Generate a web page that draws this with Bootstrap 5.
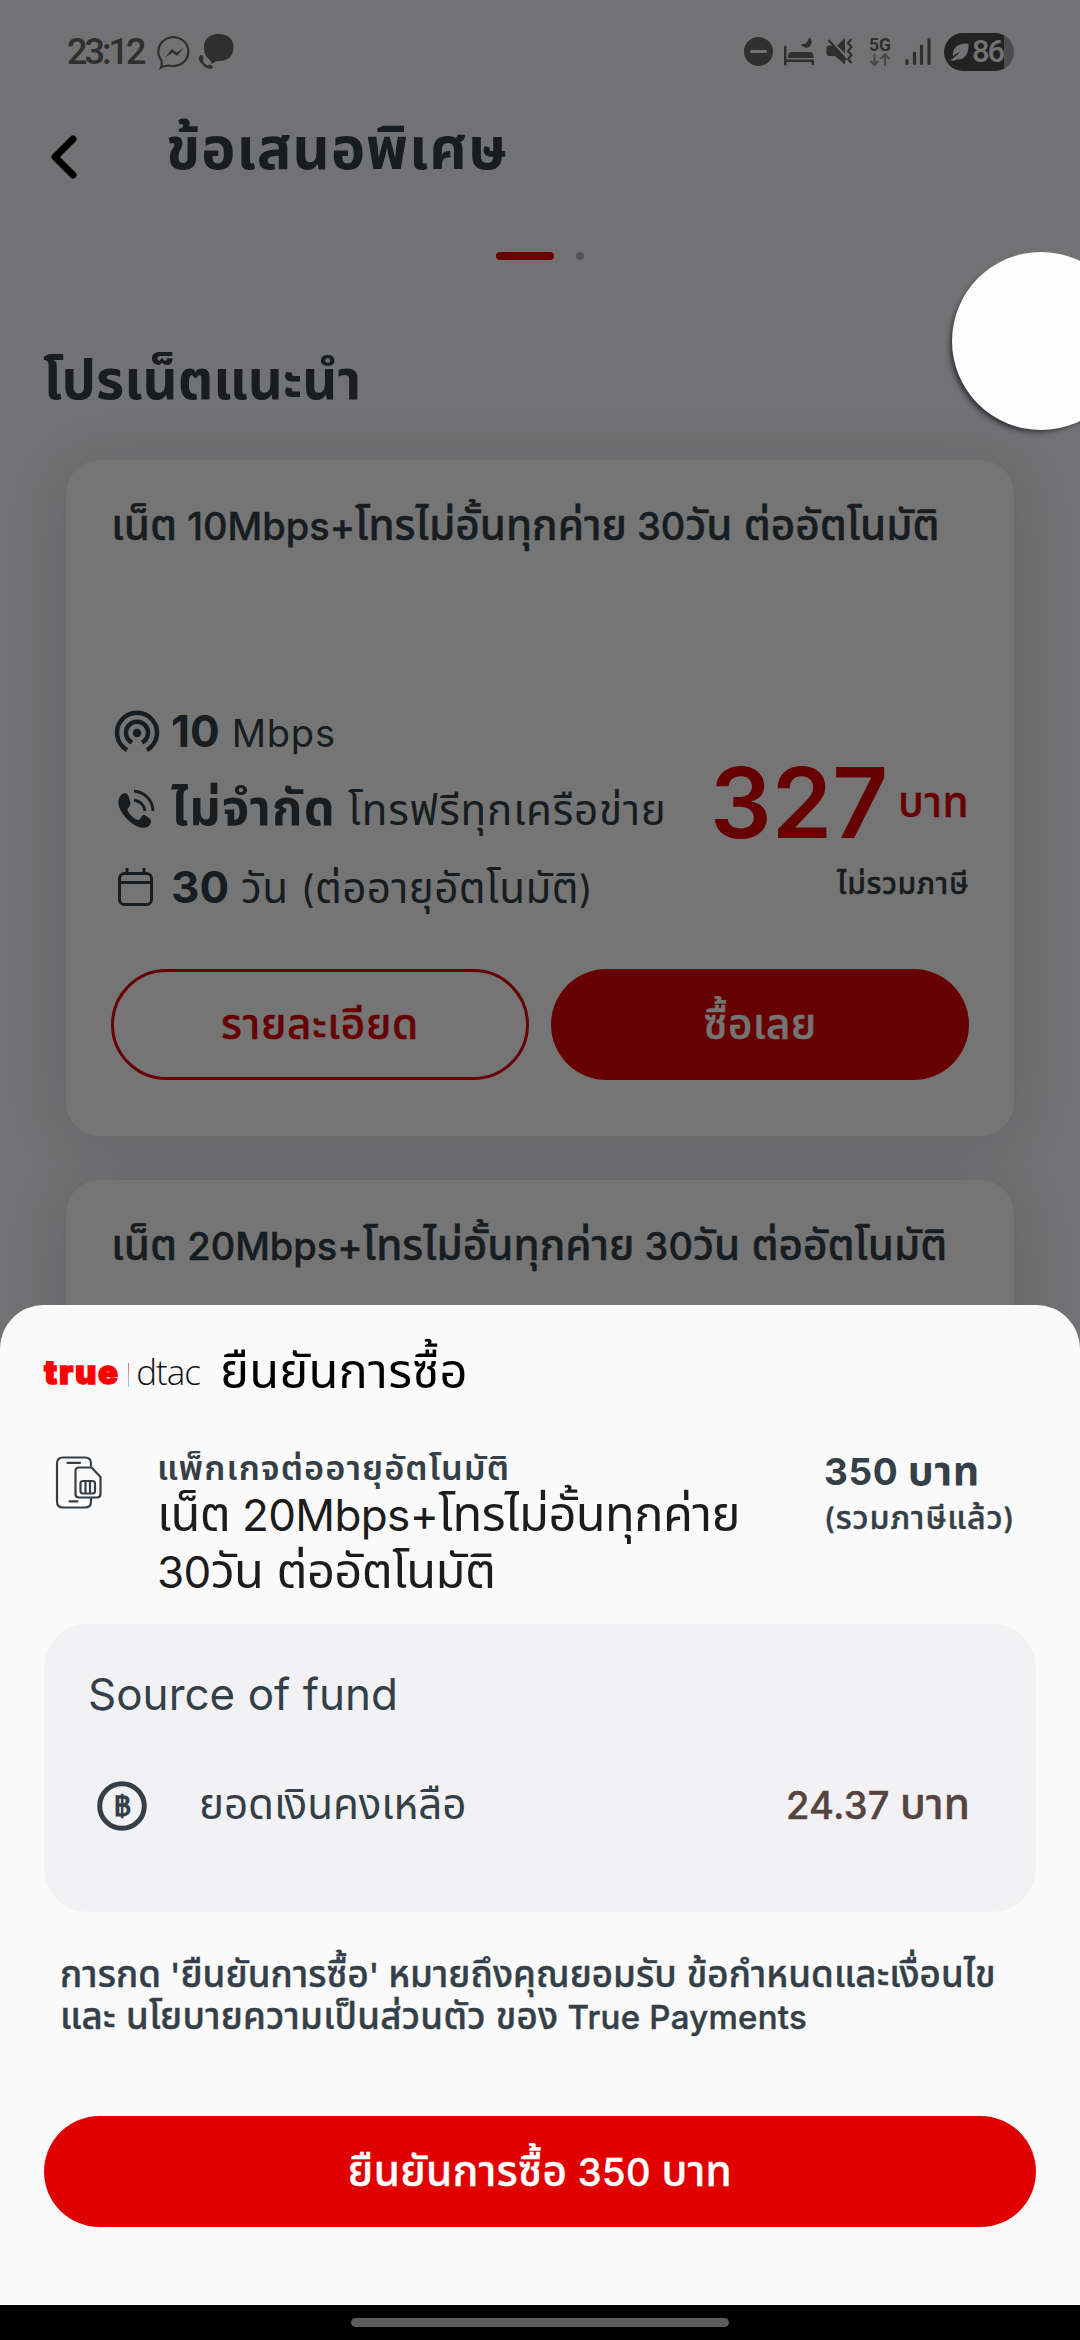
<!DOCTYPE html>
<html lang="th">
<head>
<meta charset="utf-8">
<meta name="viewport" content="width=device-width, initial-scale=1">
<title>ข้อเสนอพิเศษ</title>
<link href="https://cdn.jsdelivr.net/npm/bootstrap@5.3.0/dist/css/bootstrap.min.css" rel="stylesheet">
<style>
body{font-family:Inter,"Noto Sans Thai",sans-serif;color:#343f48;background:#000}
.screen{width:1080px;height:2340px;background:#f8f8fc}
/* Thai runs are set slightly larger than the Latin ones beside them */
.t{white-space:nowrap;display:inline-block}
.t>b{font-size:1.11em;line-height:0;font-weight:inherit}
.m{font-weight:500;-webkit-text-stroke:.45px currentColor}
.status{height:104px;padding:0 66px 0 67px}
.clock{font:500 36px/104px Roboto,sans-serif;color:#666;letter-spacing:-3px;width:76px}
.batt{width:70px;height:38px;margin-left:4px;border-radius:19px;background:linear-gradient(90deg,#4a4a4a 60px,#a6a6aa 60px);color:#f8f8fc;font:500 31px/38px Roboto,sans-serif;letter-spacing:-2.2px}
.topbar{height:94px;padding-left:51px}
.topbar svg{margin-top:11px}
.pagetitle{font-weight:700;font-size:52px;line-height:94px;margin-left:89px;letter-spacing:1px}
.dots{height:116px;gap:22px}
.dot-on{width:58px;height:8px;border-radius:4px;background:#e00000}
.dot-off{width:8px;height:8px;border-radius:4px;background:#b4b8c4}
.sect{height:146px;padding-left:43px;font-weight:700;font-size:49px;line-height:136px}
.offer{margin:0 66px 44px;border:0;border-radius:34px;background:#fff;padding:0 45px;box-shadow:0 6px 60px rgba(0,0,0,.13);height:676px}
.offer-title{font-size:38px;line-height:133px;height:232px}
.feat{height:78px}
.f-b{font-size:44px;font-weight:700;line-height:79px;margin-right:12px}
.f-u{letter-spacing:1.3px}
.f-t{font-size:38px;line-height:83px}
.g8{letter-spacing:.8px}
.g4{letter-spacing:.38px}
.price{padding-top:50px;color:#e00000}
.p-num{font-size:97px;font-weight:600;line-height:121px;margin-right:10px}
.p-unit{font-size:38px;line-height:122px;letter-spacing:.5px}
.p-note{font-size:27px;line-height:41px;color:#343f48;letter-spacing:.63px}
.acts{gap:22px;margin-top:43px}
.pill{height:111px;border-radius:56px;font-size:38px;padding:0;border:0;line-height:112px;letter-spacing:.4px}
.acts .pill{width:418px}
.pill-red,.pill-red:hover{background:#e00000;color:#fff}
.pill-line{border:3px solid #e00000;color:#e00000;line-height:106px;letter-spacing:.7px}
.scrim{background:rgba(0,0,0,.54)}
.bubble{width:178px;height:178px;border-radius:50%;background:#fdfdfd;left:952px;top:252px;box-shadow:-4px 4px 5px -2px rgba(20,25,30,.7)}
.bsheet{top:1305px;height:1000px;background:#fafafa;border-radius:44px 44px 0 0;padding:0 44px;border-top:1px solid #fff}
.head{height:131px}
.logo-true{font-weight:900;font-size:33px;color:#f00;line-height:132px;-webkit-text-stroke:1.4px #f00;letter-spacing:1.7px}
.logo-sep{width:1.5px;height:24px;margin:6px 7px 0 8px;background:linear-gradient(#f66,#caa 50%,#6df)}
.logo-dtac{font:300 35px/132px "Open Sans",sans-serif;color:#111;letter-spacing:-1px}
.h-title{font-size:44px;line-height:130px;color:#000;margin-left:20px;letter-spacing:.2px}
.item{height:187px}
.simcell{width:113px}
.desc{padding-top:14px}
.i-a{font-size:31px;font-weight:600;line-height:36px;letter-spacing:1.04px}
.i-b{font-size:44px;line-height:57px;color:#1c1c1c;letter-spacing:-.63px}
.cost{padding-top:11px;width:212px}
.p-a{font-size:37px;font-weight:700;line-height:47px;letter-spacing:.6px}
.p-b{font-size:29px;line-height:47px;letter-spacing:.93px}
.fund{height:288px;border-radius:44px;background:#f2f2f5;padding:0 66px 0 44px}
.s-a{font-size:44px;line-height:140px}
.s-b{font-size:38px;line-height:82px;letter-spacing:-.1px}
.s-c{font-size:38px;line-height:82px;color:#55433f;letter-spacing:.2px}
.coin{width:111px;height:84px}
.terms{margin:43px 0 78px 16px;font-size:33px;line-height:41.5px;letter-spacing:.1px}
.g3{letter-spacing:.28px}
.navb{height:35px;background:#000;top:2305px}
.handle{width:378px;height:9px;border-radius:5px;background:#5c5c5c}
</style>
</head>
<body>
<div class="screen position-relative overflow-hidden">
  <div class="status d-flex align-items-center justify-content-between">
    <div class="d-flex align-items-center">
      <span class="t clock">23:12</span>
      <svg width="92" height="104" viewBox="143 0 92 104"><path d="M161 67.500C162 65 162 62.500 161.500 60.500A15 14.500 0 1 1 169 65.500Q165 65.500 161 67.500Z" fill="none" stroke="#666" stroke-width="2.200"/><path d="M165 57.500 172 49 176.500 52.500 183.500 48 177 56 172.500 52.800Z" fill="#666"/><path d="M218 34C227 34 233.500 38 233.500 47S228 61 219 61Q215 61 212 64 211 61 209 59C206 57 204 53 204 47 204 39 210 34 218 34Z" fill="#666"/><path d="M200 55.500C198 57 198.500 60 201 63 204 67 208 69.500 212 68.500 214 67.500 212 65 210 64.500L207.500 65.500C205 64.500 203.500 62.500 203 60.500L203.500 58C203 55.500 201.500 54.500 200 55.500Z" fill="#666"/></svg>
    </div>
    <div class="d-flex align-items-center">
      <svg width="200" height="104" viewBox="740 0 200 104" fill="#666"><circle cx="758.500" cy="51.500" r="14.500"/><path d="M751.500 51.500h14" stroke="#f8f8fc" stroke-width="3" stroke-linecap="round"/>
      <path d="M784 47q0-1.500 1.200-1.500T786.500 47V59.500H813q1 0 1 1.200V65h-2.500v-3H786.500v3.500H784ZM788 58v-2q0-4 4-4h17q4.500 0 4.500 4v2Z"/><path d="M809 37.500a5.500 5.500 0 1 1-8 6.500q6 1.500 8-6.500Z"/>
      <path d="M845 38v15.500L837 45.500ZM829 45.500h4.500L845 57v7.500L835 56h-6q-2.500 0-2.500-2.500V48q0-2.500 2.500-2.500Z"/><path d="M828.500 40 846 60" stroke="#666" stroke-width="2.400"/><path d="M851.500 39l-3.500 4 3.500 4-3.500 4 3.500 4-3.500 4 3.500 4" fill="none" stroke="#666" stroke-width="2.200" stroke-linejoin="round"/>
      <text x="869" y="51" font-family="Roboto" font-weight="700" font-size="17.500" textLength="22">5G</text><path d="M874.500 54v11m-4-4 4 4 4-4M885 66V55m-4.500 4 4.500-4.500 4.500 4.500" fill="none" stroke="#999" stroke-width="2"/>
      <path d="M907 60.500v3M914.500 53v10.500M921.500 46v17.500M929 39.500v24" stroke="#666" stroke-width="3.200" stroke-linecap="round"/></svg>
      <div class="batt d-flex align-items-center"><svg width="28" height="38" viewBox="0 0 28 38" fill="#f8f8fc"><path d="M9 23.500C8 15 13 10.500 24.500 10.500 25 21 21 27 12.500 26.500 10 28 8 28 6 27 9 26 12 23 16.500 18.500 13 20 11 21.500 9 23.500Z"/></svg><span class="t">86</span></div>
    </div>
  </div>
  <div class="topbar d-flex align-items-center">
    <svg width="26" height="44" viewBox="0 0 26 44" fill="none" stroke="#000" stroke-width="7" stroke-linecap="round" stroke-linejoin="round"><path d="M22 4 4 22 22 40"/></svg>
    <span class="t pagetitle"><b>ข้อเสนอพิเศษ</b></span>
  </div>
  <div class="dots d-flex align-items-center justify-content-center"><i class="dot-on"></i><i class="dot-off"></i></div>
  <div class="sect"><span class="t"><b>โปรเน็ตแนะนำ</b></span></div>
  <div class="card offer">
    <div class="offer-title"><span class="t m"><b>เน็ต</b> 10Mbps+<b>โทรไม่อั้นทุกค่าย</b> 30<b>วัน ต่ออัตโนมัติ</b></span></div>
    <div class="d-flex justify-content-between">
      <div>
        <div class="feat d-flex"><svg width="60" height="78" viewBox="111 692 60 78" fill="none" stroke="#343f48" stroke-width="4.500"><path d="M127 750A20 20 0 1 1 147 750M132 742.500A11 11 0 1 1 142 742.500"/><circle cx="137" cy="733" r="4.300" fill="#343f48" stroke="none"/></svg><span class="t f-b">10</span><span class="t f-t g8">Mbps</span></div>
        <div class="feat d-flex"><svg width="60" height="78" viewBox="111 770 60 78"><path d="M121 795C124 792 127.500 793 128.500 796L130.500 803C131 806 127 808 127.500 810 129 814.500 134 819 138 820 141 820 141 814 145 815L150 819C152 821 151 823 149 826 144 830 135 827 128 820 120 812 115 802 121 795Z" fill="#343f48"/><path d="M134 791C144 792 153 800 153 811M134 800C140 801 144 805 145 811" fill="none" stroke="#343f48" stroke-width="2.800"/></svg><span class="t f-b f-u"><b>ไม่จำกัด</b></span><span class="t f-t g8"><b>โทรฟรีทุกเครือข่าย</b></span></div>
        <div class="feat d-flex"><svg width="60" height="78" viewBox="111 848 60 78" fill="none" stroke="#343f48" stroke-width="3"><rect x="119.500" y="873.500" width="32" height="31" rx="5"/><path d="M119.500 882.500h32M127 868v5M144 868v5"/></svg><span class="t f-b">30</span><span class="t f-t g4"><b>วัน </b>(<b>ต่ออายุอัตโนมัติ</b>)</span></div>
      </div>
      <div class="price text-end"><div class="d-flex"><span class="t p-num">327</span><span class="t p-unit m"><b>บาท</b></span></div><span class="t p-note m"><b>ไม่รวมภาษี</b></span></div>
    </div>
    <div class="d-flex acts"><button class="btn pill pill-line"><span class="t m"><b>รายละเอียด</b></span></button><button class="btn pill pill-red"><span class="t m"><b>ซื้อเลย</b></span></button></div>
  </div>
  <div class="card offer"><div class="offer-title"><span class="t m"><b>เน็ต</b> 20Mbps+<b>โทรไม่อั้นทุกค่าย</b> 30<b>วัน ต่ออัตโนมัติ</b></span></div></div>
  <div class="scrim position-absolute top-0 start-0 w-100 h-100"></div>
  <div class="bubble position-absolute"></div>
  <div class="bsheet position-absolute start-0 w-100">
    <div class="head d-flex align-items-center"><span class="t logo-true">true</span><i class="logo-sep"></i><span class="t logo-dtac">dtac</span><span class="t h-title"><b>ยืนยันการซื้อ</b></span></div>
    <div class="item d-flex">
      <div class="simcell"><svg width="64" height="90" viewBox="44 1437 64 90" fill="none" stroke="#343f48" stroke-width="2.200" stroke-linecap="round" stroke-linejoin="round"><path d="M91 1465.500V1463.500Q91 1457.500 85 1457.500H63Q57 1457.500 57 1463.500V1501.500Q57 1507.500 63 1507.500H85Q91 1507.500 91 1501.500V1498.500M67.500 1462.800H80M69.500 1501.300H77.500M79 1467.500H91.500L100.500 1477V1494Q100.500 1497.500 97 1497.500H79Q75.500 1497.500 75.500 1494V1471Q75.500 1467.500 79 1467.500Z"/><rect x="80.500" y="1481" width="14.500" height="12.500" rx="2.500"/><path d="M85.500 1481.500v11.500M90 1481.500v11.500"/></svg></div>
      <div class="flex-fill desc"><div class="i-a"><span class="t"><b>แพ็กเกจต่ออายุอัตโนมัติ</b></span></div><div class="i-b"><span class="t"><b>เน็ต</b> 20Mbps+<b>โทรไม่อั้นทุกค่าย</b></span><br><span class="t">30<b>วัน ต่ออัตโนมัติ</b></span></div></div>
      <div class="cost"><div class="p-a"><span class="t">350 <b>บาท</b></span></div><div class="p-b"><span class="t m">(<b>รวมภาษีแล้ว</b>)</span></div></div>
    </div>
    <div class="fund"><div class="s-a"><span class="t">Source of fund</span></div><div class="d-flex"><svg class="coin" viewBox="88 1764 111 84"><circle cx="122" cy="1806" r="22.300" fill="none" stroke="#343f48" stroke-width="5"/><text x="122.500" y="1816" text-anchor="middle" font-family="Roboto" font-weight="700" font-size="28" fill="#343f48">฿</text></svg><span class="t s-b"><b>ยอดเงินคงเหลือ</b></span><span class="t s-c m ms-auto">24.37 <b>บาท</b></span></div></div>
    <div class="terms"><span class="t m"><b>การกด</b> '<b>ยืนยันการซื้อ</b>' <b>หมายถึงคุณยอมรับ ข้อกำหนดและเงื่อนไข</b></span><br><span class="t m g3"><b>และ นโยบายความเป็นส่วนตัว ของ</b> True Payments</span></div>
    <button class="btn pill pill-red w-100"><span class="t m"><b>ยืนยันการซื้อ</b> 350 <b>บาท</b></span></button>
  </div>
  <div class="navb position-absolute start-0 w-100 d-flex align-items-center justify-content-center"><i class="handle"></i></div>
</div>
</body></html>
